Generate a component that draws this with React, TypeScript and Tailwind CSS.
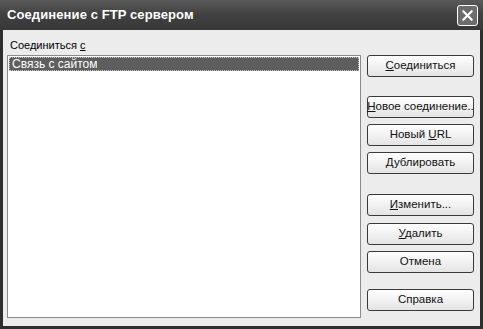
import { X } from 'lucide-react';

const buttons = [
  { label: 'Соединиться', u: 'С', rest: 'оединиться', mt: 'mt-0' },
  { label: 'Новое соединение..', u: 'Н', rest: 'овое соединение..', mt: 'mt-[19px]' },
  { label: 'Новый URL', pre: 'Новый ', u: 'U', rest: 'RL', mt: 'mt-[6px]' },
  { label: 'Дублировать', pre: 'Дублировать', u: '', rest: '', mt: 'mt-[6px]' },
  { label: 'Изменить...', u: 'И', rest: 'зменить...', mt: 'mt-[20px]' },
  { label: 'Удалить', u: 'У', rest: 'далить', mt: 'mt-[7px]' },
  { label: 'Отмена', pre: 'Отмена', u: '', rest: '', mt: 'mt-[6px]' },
  { label: 'Справка', pre: 'Справка', u: '', rest: '', mt: 'mt-[16px]' },
];

const App = () => {
  return (
    <div
      className="w-[483px] h-[329px] bg-[#2e2e2e] flex flex-col overflow-hidden"
      style={{ fontFamily: '"Liberation Sans", Arial, sans-serif' }}
    >
      {/* title bar */}
      <div className="h-[30px] shrink-0 flex items-center justify-between pl-[7px] pr-[5px] bg-gradient-to-b from-[#5a5a5a] via-[#404040] to-[#383838]">
        <span className="text-white font-bold text-[13px] tracking-[0.1px]">
          Соединение с FTP сервером
        </span>
        <div className="w-[21px] h-[21px] rounded-[3px] border border-white bg-[#6c6c6c] flex items-center justify-center">
          <X size={17} strokeWidth={3} className="text-white" />
        </div>
      </div>

      {/* body */}
      <div className="flex-1 mx-[3px] mb-[3px] bg-[#ececec] flex pt-[6px] pl-[4px] pr-[6px]">
        <div className="flex flex-col w-[355px]">
          <div className="text-[11px] text-black h-[19px] pl-[3px] pt-[1px]">
            Соединиться <span className="underline">с</span>
          </div>
          <div className="h-[263px] bg-white border border-[#8a8a8a] p-[1px]">
            <div className="h-[14px] bg-[#5e5e5e] border border-dotted border-[#c8c8c8] text-white text-[12px] leading-[12px] pl-[2px] w-[350px]">
              Связь с сайтом
            </div>
          </div>
        </div>
        <div className="flex flex-col ml-[6px] pt-[19px]">
          {buttons.map((b) => (
            <div
              key={b.label}
              className={`${b.mt} w-[107px] h-[22px] rounded-[3px] border border-[#3a3a3a] bg-gradient-to-b from-white to-[#e4e4e4] flex items-center justify-center text-[11.5px] text-[#111] whitespace-nowrap`}
            >
              <span className="whitespace-pre">
                {b.pre}
                {b.u && <span className="underline">{b.u}</span>}
                {b.rest}
              </span>
            </div>
          ))}
        </div>
      </div>
    </div>
  );
};

export default App;
